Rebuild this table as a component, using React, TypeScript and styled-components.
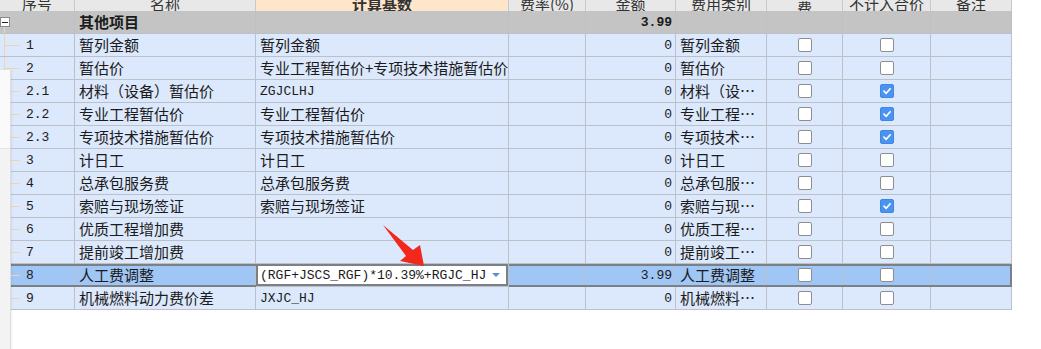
import React from "react";
import styled, { createGlobalStyle, css } from "styled-components";

const GlobalStyle = createGlobalStyle`
  html, body {
    margin: 0;
    padding: 0;
    background: #fff;
  }
  body {
    font-family: "Noto Sans CJK SC", "Liberation Sans", sans-serif;
    font-size: 15px;
    color: #1b1b1b;
  }
`;

const COLUMNS = "75px 181px 253px 77px 90px 91px 76px 88px 81px";
const LINE = "#bcc1c9";
const TREE = "#f0d3b1";

const Page = styled.div`
  position: relative;
  width: 1041px;
  height: 349px;
  overflow: hidden;
`;

const Table = styled.div`
  width: 1012px;
  display: flex;
  flex-direction: column;
`;

// only the lower part of the header strip is in view
const HeaderClip = styled.div`
  height: 11px;
  overflow: hidden;
  display: flex;
  align-items: flex-end;
`;

const HeaderRow = styled.div`
  display: grid;
  grid-template-columns: ${COLUMNS};
  height: 23px;
  flex-shrink: 0;
`;

const HeaderCell = styled.div<{ $active?: boolean; $low?: boolean }>`
  box-sizing: border-box;
  display: flex;
  align-items: center;
  justify-content: center;
  background: #e8e8e8;
  border-right: 1px solid #c9c9c9;
  border-bottom: 1px solid #c9c9c9;
  color: #333;
  line-height: 23px;
  white-space: nowrap;
  ${(p) => p.$low && css`padding-top: 8px;`}
  ${(p) =>
    p.$active &&
    css`
      background: #fde6c9;
      font-weight: bold;
      border-bottom: 2px solid #4a8fe0;
    `}
`;

const Row = styled.div<{ $group?: boolean; $selected?: boolean }>`
  position: relative;
  display: grid;
  grid-template-columns: ${COLUMNS};
  height: 23px;
  background: ${(p) => (p.$group ? "#c4c4c4" : p.$selected ? "#a0c6f6" : "#dce8fb")};
  ${(p) =>
    p.$selected &&
    css`
      &::after {
        content: "";
        position: absolute;
        inset: 0;
        border: 2px solid #7b7f86;
        pointer-events: none;
      }
    `}
`;

const Cell = styled.div<{ $align?: "left" | "right" | "center"; $bold?: boolean }>`
  box-sizing: border-box;
  position: relative;
  display: flex;
  align-items: center;
  justify-content: ${(p) =>
    p.$align === "right" ? "flex-end" : p.$align === "center" ? "center" : "flex-start"};
  padding: 0 ${(p) => (p.$align === "right" ? "3px" : "4px")};
  border-right: 1px solid ${LINE};
  border-bottom: 1px solid ${LINE};
  white-space: nowrap;
  overflow: hidden;
  line-height: 22px;
  font-weight: ${(p) => (p.$bold ? "bold" : "normal")};
`;

const Clip = styled.span`
  display: block;
  overflow: hidden;
  text-overflow: ellipsis;
  white-space: nowrap;
  min-width: 0;
`;

const Mono = styled.span<{ $bold?: boolean }>`
  font-family: "Liberation Mono", "DejaVu Sans Mono", monospace;
  font-size: 13px;
  line-height: 16px;
  margin-top: 2px;
  font-weight: ${(p) => (p.$bold ? "bold" : "normal")};
`;

// number column with the tree guide lines
const NoCell = styled(Cell)<{ $last?: boolean }>`
  padding-left: 26px;
  &::before {
    content: "";
    position: absolute;
    left: 4px;
    top: 0;
    bottom: ${(p) => (p.$last ? "50%" : "0")};
    width: 1px;
    background: ${TREE};
  }
  &::after {
    content: "";
    position: absolute;
    left: 4px;
    top: 11px;
    width: 16px;
    height: 1px;
    background: ${TREE};
  }
`;

const GroupNoCell = styled(Cell)`
  padding: 0;
  &::before {
    content: "";
    position: absolute;
    left: 4px;
    top: 16px;
    bottom: 0;
    width: 1px;
    background: ${TREE};
  }
`;

const Collapse = styled.span`
  position: relative;
  z-index: 1;
  box-sizing: border-box;
  width: 10px;
  height: 10px;
  border: 1px solid #8c8c8c;
  background: #fff;
  display: flex;
  align-items: center;
  justify-content: center;
  &::before {
    content: "";
    width: 6px;
    height: 1px;
    background: #222;
  }
`;

const EditCell = styled(Cell)`
  background: #fff;
  justify-content: space-between;
  box-shadow: inset 0 0 0 2px #7b7f86;
  padding-right: 8px;
  z-index: 1;
`;

const DropCaret = styled.span`
  width: 0;
  height: 0;
  border-left: 4px solid transparent;
  border-right: 4px solid transparent;
  border-top: 4px solid #5f8ec4;
`;

const Box = styled.span<{ $on?: boolean }>`
  box-sizing: border-box;
  width: 14px;
  height: 14px;
  border-radius: 2px;
  border: 1px solid ${(p) => (p.$on ? "#3f87e6" : "#8e8e8e")};
  background: ${(p) => (p.$on ? "#4b93f0" : "#fff")};
  display: flex;
  align-items: center;
  justify-content: center;
`;

const SidePanel = styled.div`
  position: absolute;
  left: 0;
  top: 70px;
  bottom: 0;
  width: 10px;
  display: flex;
  flex-direction: column;
  border-right: 1px solid #dcdcdc;
  box-shadow: 1px 0 2px rgba(0, 0, 0, 0.06);
  z-index: 3;
`;

const PanelPart = styled.div<{ $tone: string; $grow?: boolean }>`
  background: ${(p) => p.$tone};
  height: ${(p) => (p.$grow ? "auto" : "78px")};
  flex: ${(p) => (p.$grow ? 1 : "none")};
  border-bottom: ${(p) => (p.$grow ? "none" : "1px solid #e3e3e3")};
`;

const Pointer = styled.svg`
  position: absolute;
  left: 0;
  top: 0;
  z-index: 4;
  pointer-events: none;
`;

interface Item {
  no: string;
  name: string;
  base: string;
  mono?: boolean;
  amount: string;
  category: string;
  excluded?: boolean;
  selected?: boolean;
}

const items: Item[] = [
  { no: "1", name: "暂列金额", base: "暂列金额", amount: "0", category: "暂列金额" },
  { no: "2", name: "暂估价", base: "专业工程暂估价+专项技术措施暂估价", amount: "0", category: "暂估价" },
  { no: "2.1", name: "材料（设备）暂估价", base: "ZGJCLHJ", mono: true, amount: "0", category: "材料（设备）暂估价", excluded: true },
  { no: "2.2", name: "专业工程暂估价", base: "专业工程暂估价", amount: "0", category: "专业工程暂估价", excluded: true },
  { no: "2.3", name: "专项技术措施暂估价", base: "专项技术措施暂估价", amount: "0", category: "专项技术措施暂估价", excluded: true },
  { no: "3", name: "计日工", base: "计日工", amount: "0", category: "计日工" },
  { no: "4", name: "总承包服务费", base: "总承包服务费", amount: "0", category: "总承包服务费" },
  { no: "5", name: "索赔与现场签证", base: "索赔与现场签证", amount: "0", category: "索赔与现场签证", excluded: true },
  { no: "6", name: "优质工程增加费", base: "", amount: "0", category: "优质工程增加费" },
  { no: "7", name: "提前竣工增加费", base: "", amount: "0", category: "提前竣工增加费" },
  { no: "8", name: "人工费调整", base: "(RGF+JSCS_RGF)*10.39%+RGJC_HJ", mono: true, amount: "3.99", category: "人工费调整", selected: true },
  { no: "9", name: "机械燃料动力费价差", base: "JXJC_HJ", mono: true, amount: "0", category: "机械燃料动力费价差" },
];

const Check = ({ on }: { on?: boolean }) => (
  <Box $on={on}>
    {on && (
      <svg width="10" height="10" viewBox="0 0 10 10">
        <polyline points="2,5.2 4.2,7.3 8.2,2.8" fill="none" stroke="#fff" strokeWidth="1.7" strokeLinecap="round" strokeLinejoin="round" />
      </svg>
    )}
  </Box>
);

const App = () => (
  <Page>
    <GlobalStyle />
    <Table>
      <HeaderClip>
        <HeaderRow>
          <HeaderCell>序号</HeaderCell>
          <HeaderCell>名称</HeaderCell>
          <HeaderCell $active>计算基数</HeaderCell>
          <HeaderCell>费率(%)</HeaderCell>
          <HeaderCell>金额</HeaderCell>
          <HeaderCell>费用类别</HeaderCell>
          <HeaderCell $low>费</HeaderCell>
          <HeaderCell>不计入合价</HeaderCell>
          <HeaderCell>备注</HeaderCell>
        </HeaderRow>
      </HeaderClip>

      <Row $group>
        <GroupNoCell>
          <Collapse />
        </GroupNoCell>
        <Cell $bold>其他项目</Cell>
        <Cell />
        <Cell />
        <Cell $align="right">
          <Mono $bold>3.99</Mono>
        </Cell>
        <Cell />
        <Cell />
        <Cell />
        <Cell />
      </Row>

      {items.map((it, i) => {
        const base = it.mono ? <Mono>{it.base}</Mono> : it.base;
        return (
          <Row key={it.no} $selected={it.selected}>
            <NoCell $last={i === items.length - 1}>
              <Mono>{it.no}</Mono>
            </NoCell>
            <Cell>{it.name}</Cell>
            {it.selected ? (
              <EditCell>
                {base}
                <DropCaret />
              </EditCell>
            ) : (
              <Cell>{base}</Cell>
            )}
            <Cell />
            <Cell $align="right">
              <Mono>{it.amount}</Mono>
            </Cell>
            <Cell>
              <Clip>{it.category}</Clip>
            </Cell>
            <Cell $align="center">
              <Check />
            </Cell>
            <Cell $align="center">
              <Check on={it.excluded} />
            </Cell>
            <Cell />
          </Row>
        );
      })}
    </Table>

    <SidePanel>
      <PanelPart $tone="#fafafa" />
      <PanelPart $tone="#f3f3f3" $grow />
    </SidePanel>

    <Pointer width="1041" height="349" viewBox="0 0 1041 349">
      <polygon
        points="383,225 413,250 420,245 424,266 400,261 406,256"
        fill="#f2281c"
      />
    </Pointer>
  </Page>
);

export default App;
